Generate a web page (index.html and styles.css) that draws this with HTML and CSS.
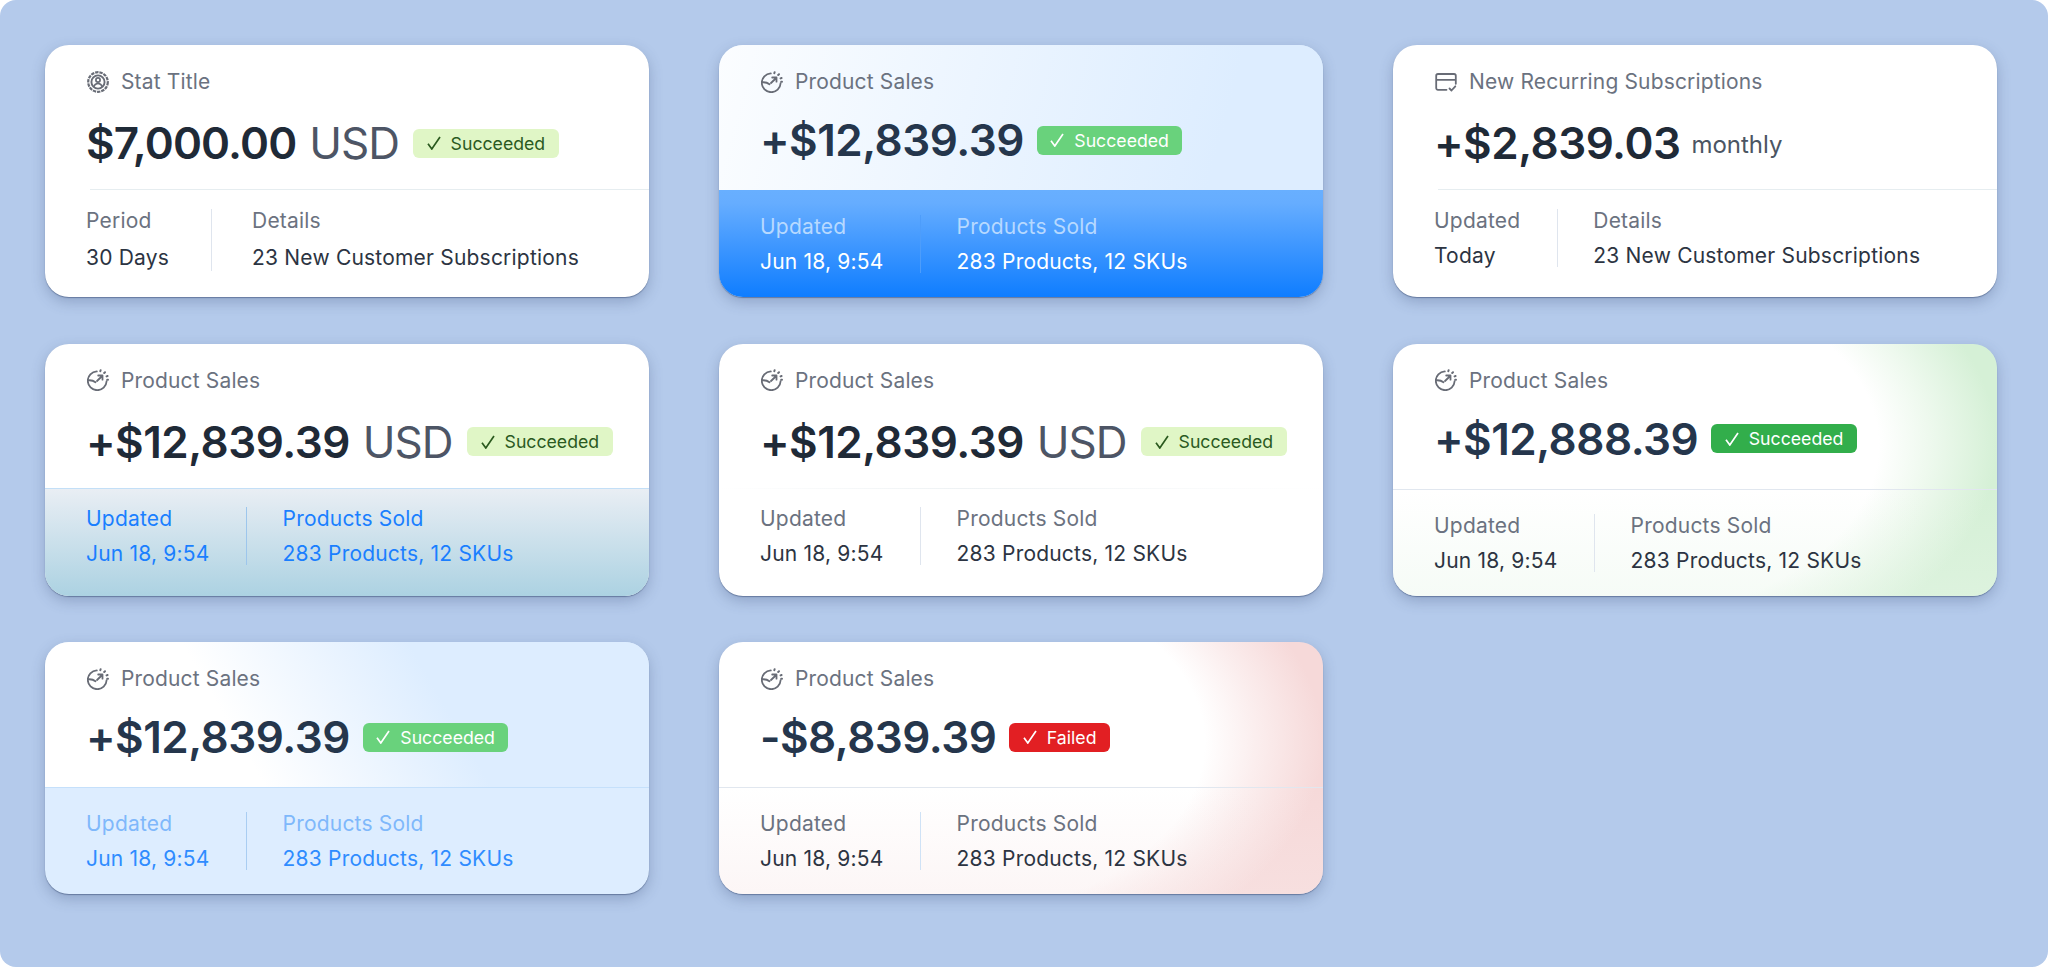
FILE: index.html
```html
<!DOCTYPE html>
<html lang="en">
<head>
  <meta charset="UTF-8" />
  <meta name="viewport" content="width=device-width, initial-scale=1.0"/>
  <title>Stat Cards</title>
  <link rel="stylesheet" href="styles.css">
</head>
<body>
  <svg class="icon-defs" width="0" height="0" aria-hidden="true">
    <symbol id="icon-target" viewBox="0 0 22 22">
      <circle cx="11" cy="11" r="9.8" fill="none" stroke="currentColor" stroke-width="2.2" stroke-dasharray="3.4 0.9"/>
      <circle cx="11" cy="11" r="6.6" fill="none" stroke="currentColor" stroke-width="1.9"/>
      <circle cx="11" cy="9" r="2.1" fill="none" stroke="currentColor" stroke-width="1.7"/>
      <path d="M6.800 15.800c.6-2.200 2.300-3.300 4.200-3.300s3.600 1.100 4.200 3.300" fill="none" stroke="currentColor" stroke-width="1.700"/>
    </symbol>
    <symbol id="icon-sales" viewBox="0 0 22 22">
      <path d="M9.800 2.400a9.400 9.400 0 1 0 9.800 9.800" fill="none" stroke="currentColor" stroke-width="1.800" stroke-linecap="round"/>
      <path d="M1.500 11.300c2.600-.2 5 .4 7 2M10 12l5.200-5M11.200 6.500h4.300v4.200" fill="none" stroke="currentColor" stroke-width="1.800" stroke-linecap="round" stroke-linejoin="round"/>
      <path d="M13.600 1.200l-.3 1M18 3.200l-.8.8M20.600 7l-1 .4M21 10.800h-.8" fill="none" stroke="currentColor" stroke-width="2" stroke-linecap="round"/>
    </symbol>
    <symbol id="icon-card" viewBox="0 0 22 22">
      <path d="M11.500 18.800H3a1.800 1.800 0 0 1-1.800-1.800V4.800A1.800 1.800 0 0 1 3 3h16a1.800 1.800 0 0 1 1.800 1.800v8" fill="none" stroke="currentColor" stroke-width="1.800" stroke-linecap="round"/>
      <path d="M1.500 8.800h19" fill="none" stroke="currentColor" stroke-width="1.800"/>
      <path d="M14.500 17.500l2 2 3.800-4.200" fill="none" stroke="currentColor" stroke-width="1.800" stroke-linecap="round" stroke-linejoin="round"/>
    </symbol>
    <symbol id="icon-check" viewBox="0 0 14 14">
      <path d="M1 7.800l3.800 5.200L13 1" fill="none" stroke="currentColor" stroke-width="1.700"/>
    </symbol>
  </svg>

  <main class="card-grid">

    <section class="stat-card inset-line">
      <div class="card-top">
        <div class="card-title"><svg class="title-icon"><use href="#icon-target"/></svg>Stat Title</div>
        <div class="card-value value-low">
          <span class="amount amount-tight">$7,000.00</span>
          <span class="currency">USD</span>
          <span class="badge badge-light"><svg class="check"><use href="#icon-check"/></svg>Succeeded</span>
        </div>
      </div>
      <div class="card-bottom foot-high foot-wide">
        <div class="stat-col col-first"><span class="stat-label">Period</span><span class="stat-text">30 Days</span></div>
        <div class="stat-col"><span class="stat-label">Details</span><span class="stat-text">23 New Customer Subscriptions</span></div>
      </div>
    </section>

    <section class="stat-card card-blue-solid">
      <div class="card-top">
        <div class="card-title"><svg class="title-icon"><use href="#icon-sales"/></svg>Product Sales</div>
        <div class="card-value">
          <span class="amount">+$12,839.39</span>
          <span class="badge badge-soft"><svg class="check"><use href="#icon-check"/></svg>Succeeded</span>
        </div>
      </div>
      <div class="card-bottom">
        <div class="stat-col"><span class="stat-label">Updated</span><span class="stat-text">Jun 18, 9:54</span></div>
        <div class="stat-col"><span class="stat-label">Products Sold</span><span class="stat-text">283 Products, 12 SKUs</span></div>
      </div>
    </section>

    <section class="stat-card inset-line">
      <div class="card-top">
        <div class="card-title"><svg class="title-icon"><use href="#icon-card"/></svg>New Recurring Subscriptions</div>
        <div class="card-value value-low">
          <span class="amount">+$2,839.03</span>
          <span class="unit">monthly</span>
        </div>
      </div>
      <div class="card-bottom foot-high">
        <div class="stat-col"><span class="stat-label">Updated</span><span class="stat-text">Today</span></div>
        <div class="stat-col"><span class="stat-label">Details</span><span class="stat-text">23 New Customer Subscriptions</span></div>
      </div>
    </section>

    <section class="stat-card card-teal">
      <div class="card-top">
        <div class="card-title"><svg class="title-icon"><use href="#icon-sales"/></svg>Product Sales</div>
        <div class="card-value value-low">
          <span class="amount">+$12,839.39</span>
          <span class="currency">USD</span>
          <span class="badge badge-light"><svg class="check"><use href="#icon-check"/></svg>Succeeded</span>
        </div>
      </div>
      <div class="card-bottom foot-high">
        <div class="stat-col"><span class="stat-label">Updated</span><span class="stat-text">Jun 18, 9:54</span></div>
        <div class="stat-col"><span class="stat-label">Products Sold</span><span class="stat-text">283 Products, 12 SKUs</span></div>
      </div>
    </section>

    <section class="stat-card card-plain">
      <div class="card-top">
        <div class="card-title"><svg class="title-icon"><use href="#icon-sales"/></svg>Product Sales</div>
        <div class="card-value value-low">
          <span class="amount">+$12,839.39</span>
          <span class="currency">USD</span>
          <span class="badge badge-light"><svg class="check"><use href="#icon-check"/></svg>Succeeded</span>
        </div>
      </div>
      <div class="card-bottom foot-high">
        <div class="stat-col"><span class="stat-label">Updated</span><span class="stat-text">Jun 18, 9:54</span></div>
        <div class="stat-col"><span class="stat-label">Products Sold</span><span class="stat-text">283 Products, 12 SKUs</span></div>
      </div>
    </section>

    <section class="stat-card card-green">
      <div class="card-top">
        <div class="card-title"><svg class="title-icon"><use href="#icon-sales"/></svg>Product Sales</div>
        <div class="card-value">
          <span class="amount">+$12,888.39</span>
          <span class="badge badge-strong"><svg class="check"><use href="#icon-check"/></svg>Succeeded</span>
        </div>
      </div>
      <div class="card-bottom">
        <div class="stat-col"><span class="stat-label">Updated</span><span class="stat-text">Jun 18, 9:54</span></div>
        <div class="stat-col"><span class="stat-label">Products Sold</span><span class="stat-text">283 Products, 12 SKUs</span></div>
      </div>
    </section>

    <section class="stat-card card-blue-soft">
      <div class="card-top">
        <div class="card-title"><svg class="title-icon"><use href="#icon-sales"/></svg>Product Sales</div>
        <div class="card-value">
          <span class="amount">+$12,839.39</span>
          <span class="badge badge-soft"><svg class="check"><use href="#icon-check"/></svg>Succeeded</span>
        </div>
      </div>
      <div class="card-bottom">
        <div class="stat-col"><span class="stat-label">Updated</span><span class="stat-text">Jun 18, 9:54</span></div>
        <div class="stat-col"><span class="stat-label">Products Sold</span><span class="stat-text">283 Products, 12 SKUs</span></div>
      </div>
    </section>

    <section class="stat-card card-red">
      <div class="card-top">
        <div class="card-title"><svg class="title-icon"><use href="#icon-sales"/></svg>Product Sales</div>
        <div class="card-value">
          <span class="amount">-$8,839.39</span>
          <span class="badge badge-failed"><svg class="check"><use href="#icon-check"/></svg>Failed</span>
        </div>
      </div>
      <div class="card-bottom">
        <div class="stat-col"><span class="stat-label">Updated</span><span class="stat-text">Jun 18, 9:54</span></div>
        <div class="stat-col"><span class="stat-label">Products Sold</span><span class="stat-text">283 Products, 12 SKUs</span></div>
      </div>
    </section>

  </main>
</body>
</html>
```

FILE: styles.css
```css
* {
  box-sizing: border-box;
}

html {
  background-color: #fff;
}

body {
  margin: 0;
  height: 967px;
  border-radius: 16px;
  background-color: #b4caeb;
  font-family: 'Inter', 'Liberation Sans', sans-serif;
  overflow: hidden;
}

.icon-defs {
  position: absolute;
}

.card-grid {
  display: grid;
  grid-template-columns: repeat(3, 604px);
  grid-auto-rows: 252px;
  column-gap: 70px;
  row-gap: 46.5px;
  padding: 45px 0 0 45px;
}

.stat-card {
  display: flex;
  flex-direction: column;
  border-radius: 24px;
  overflow: hidden;
  background-color: #fff;
  box-shadow: 0 1px 1px rgba(40, 60, 100, 0.45), 0 5px 14px rgba(50, 70, 110, 0.28);
}

.card-top {
  height: 145px;
  padding: 24.5px 41px 0;
}

.card-title {
  display: flex;
  align-items: center;
  gap: 12px;
  height: 24px;
  font-size: 21px;
  letter-spacing: 0.15px;
  color: #6b7280;
}

.title-icon {
  width: 22px;
  height: 22px;
  margin-left: 1px;
  flex-shrink: 0;
  color: #686c76;
}

.card-value {
  display: flex;
  align-items: center;
  gap: 13px;
  height: 56px;
  margin-top: 18.5px;
}

.value-low {
  margin-top: 21.5px;
}

.amount {
  font-size: 44px;
  font-weight: 575;
  letter-spacing: -0.5px;
  color: #1f2a37;
}

.amount-tight {
  letter-spacing: -0.85px;
}

.currency {
  font-size: 44px;
  letter-spacing: -1px;
  color: #4d5565;
  margin-right: 1.5px;
}

.amount-tight + .currency {
  margin-right: 1px;
}

.unit {
  font-size: 24px;
  color: #4b5563;
  margin: 3px 0 0 -2px;
}

.badge {
  display: flex;
  align-items: center;
  gap: 10px;
  height: 29px;
  padding: 0 13.5px;
  border-radius: 6px;
  font-size: 17.7px;
  white-space: nowrap;
}

.check {
  width: 14px;
  height: 14px;
}

.badge-light {
  background-color: #e0f6c6;
  color: #2b5a1f;
}

.badge-soft {
  background-color: #69d27c;
  color: #fff;
}

.badge-strong {
  background-color: #32ae4b;
  color: #fff;
}

.badge-failed {
  background-color: #e21f23;
  color: #fff;
}

.card-bottom {
  flex: 1;
  display: flex;
  padding: 24px 41px 0;
}

.foot-high {
  padding-top: 18.5px;
}

.stat-col {
  display: flex;
  flex-direction: column;
  gap: 11px;
  height: 58px;
}

.stat-col:first-child {
  padding-right: 36.5px;
  margin-right: 35.5px;
  border-right: 1px solid #dfe5ee;
}

.stat-col.col-first {
  padding-right: 42px;
  margin-right: 40px;
}

.foot-wide .stat-col {
  gap: 13px;
  height: 62px;
}

.stat-label {
  font-size: 21px;
  letter-spacing: 0.2px;
  line-height: 24px;
  color: #6b7280;
}

.stat-text {
  font-size: 21px;
  letter-spacing: 0.2px;
  line-height: 24px;
  color: #2c3442;
}

/* divider that starts at the text edge and runs off the right side */
.inset-line .card-top,
.card-plain .card-top {
  position: relative;
}

.inset-line .card-top::after {
  content: "";
  position: absolute;
  left: 45px;
  right: 0;
  bottom: 0;
  height: 1px;
  background-color: #e6edf0;
}

.card-plain .card-top::after {
  content: "";
  position: absolute;
  left: 0;
  right: 0;
  bottom: 0;
  height: 1px;
  background: linear-gradient(90deg, #fff, #eef2f4 40%, #fff);
}

/* solid blue footer */
.card-blue-solid {
  background-color: #e0efff;
}

.card-blue-solid .card-top {
  background: linear-gradient(105deg, #fbfdff 0%, #ddedff 82%);
}

.card-blue-solid .amount,
.card-green .amount,
.card-blue-soft .amount,
.card-red .amount {
  color: #25364c;
}

.card-blue-solid .card-bottom {
  padding-top: 25px;
  background: linear-gradient(180deg, #68afff 0%, #66adff 12%, #0f7dff 100%);
}

.card-blue-solid .stat-label {
  color: #b7d9ff;
}

.card-blue-solid .stat-text {
  color: #fff;
}

.card-blue-solid .stat-col:first-child {
  border-right-color: #4d9dfb;
}

/* teal fade footer */
.card-teal .card-top {
  height: 144px;
}

.card-teal .card-bottom {
  background: linear-gradient(180deg, #e9eef4 0%, #acd2e2 100%);
  border-top: 1px solid #c3dff7;
}

.card-teal .stat-label,
.card-teal .stat-text {
  color: #1a7fff;
}

.card-teal .stat-col:first-child {
  border-right-color: #9dc6ec;
}

/* soft corner washes */
.card-green .card-bottom,
.card-red .card-bottom,
.card-blue-soft .card-bottom {
  border-top: 1px solid #e1e7ef;
}

.card-green {
  background: radial-gradient(ellipse 70% 100% at 30% 40%, #fff 72%, #eef9ee 84%, #d5f0d6 100%);
}

.card-green .card-bottom {
  background: linear-gradient(180deg, rgba(240, 248, 240, 0) 0%, rgba(232, 246, 233, 0.4) 100%);
}

.card-blue-soft {
  background-color: #ddedff;
}

.card-blue-soft .card-top {
  background: linear-gradient(60deg, #fff 32%, #ddedff 65%);
}

.card-blue-soft .card-bottom {
  border-top-color: #c5e0fb;
}

.card-blue-soft .stat-label {
  color: #7fb8fb;
}

.card-blue-soft .stat-text {
  color: #2f8cff;
}

.card-blue-soft .stat-col:first-child {
  border-right-color: #a9cdf2;
}

.card-red {
  background: radial-gradient(ellipse 70% 100% at 30% 40%, #fff 72%, #fbeeee 84%, #f6d9d9 100%);
}

.card-red .card-bottom {
  background: linear-gradient(180deg, rgba(250, 240, 240, 0) 0%, rgba(248, 232, 232, 0.4) 100%);
}

.card-red .stat-col:first-child {
  border-right-color: #cfe2f6;
}
```
